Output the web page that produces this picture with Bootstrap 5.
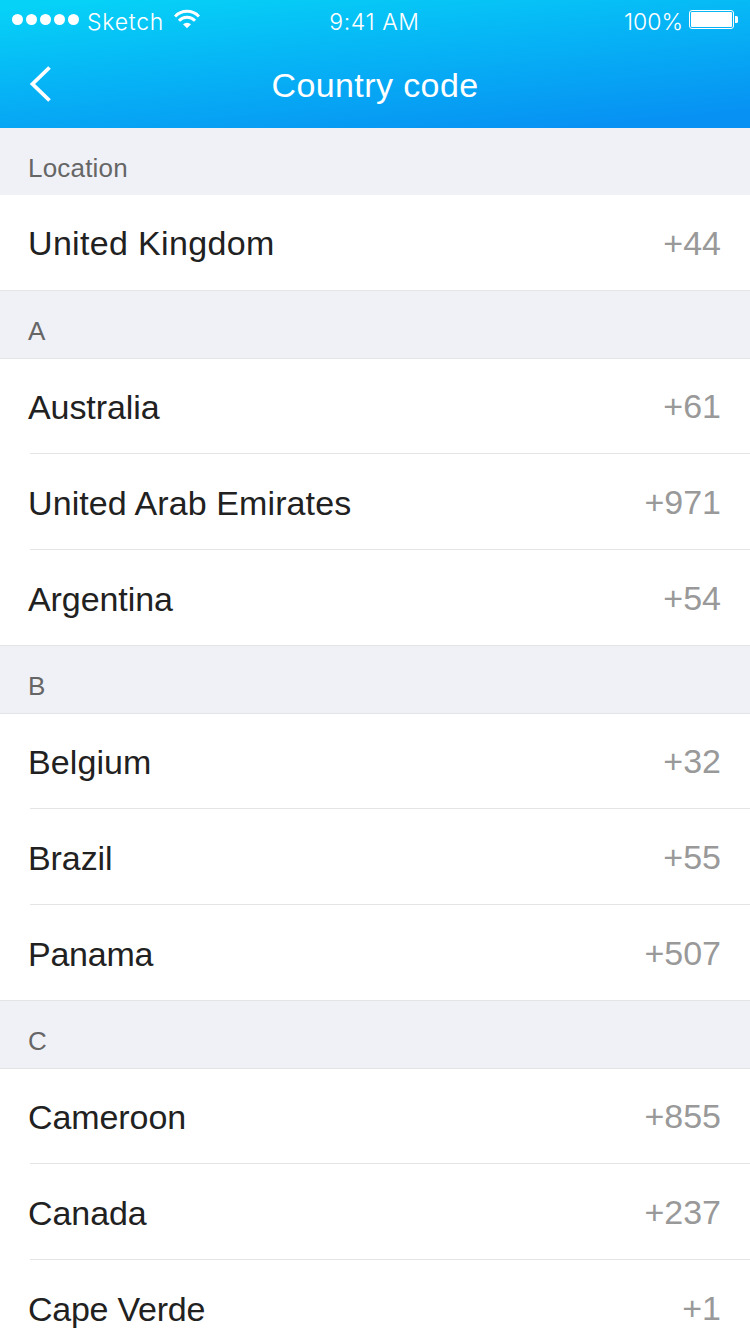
<!DOCTYPE html>
<html lang="en">
<head>
<meta charset="utf-8">
<meta name="viewport" content="width=device-width, initial-scale=1">
<title>Country code</title>
<link href="https://cdn.jsdelivr.net/npm/bootstrap@5.3.0/dist/css/bootstrap.min.css" rel="stylesheet">
<style>
body{font-family:"Liberation Sans",Arial,sans-serif;color:#212121;height:1334px;overflow:hidden}
.app-header{height:128px;background:linear-gradient(174.5deg,#06d1f7 5%,#0792f3 91%)}
.status-bar{height:40px;padding:0 12px;font:300 23px/40px Inter,sans-serif;display:grid;grid-template-columns:1fr auto 1fr}
.status-bar span{position:relative;top:2px}
.app-header svg{display:block}
.carrier{letter-spacing:.75px;margin-left:8px;width:79px;margin-right:8px}
.clock{letter-spacing:.6px;margin-right:1px}
.percent{margin-right:6px}
.title-bar{height:88px;display:grid;grid-template-columns:100px 1fr 100px}
.title-bar h1{font-size:34px;line-height:40px;letter-spacing:.4px;padding-top:2px}
.back-btn{padding-left:29px}
.section-head{height:69px;background:#f0f1f6;border-top:1px solid #e3e4e6;border-bottom:1px solid #e3e4e6;color:#666;font-size:26px;line-height:30px;padding:25px 28px 0}
.section-head.first{height:67px;border:0;padding-top:25px;letter-spacing:.2px}
.country{height:96px;padding:0 29px 0 28px;font-size:34px;line-height:40px}
.country:first-child,.country:last-child{height:95px}
.country:not(:last-child){background:linear-gradient(#e3e4e6,#e3e4e6) 30px 100%/100% 1px no-repeat}
.country-name{padding-top:29px;letter-spacing:-.08px}
.country-name.wide{letter-spacing:.33px}
.country-name.long{letter-spacing:.1px}
.country-name.tight{letter-spacing:-.25px}
.code{padding-top:28px;color:#999}
.country:first-child .country-name{padding-top:28px}
.country:first-child .code{padding-top:27px}
.first+div .country .code{padding-top:28px}
</style>
</head>
<body class="bg-white">
<header class="app-header text-white">
  <div class="status-bar">
    <div class="d-flex">
      <svg width="67" height="40" fill="#fff"><circle cx="5.5" cy="19.5" r="5.5"/><circle cx="19.5" cy="19.5" r="5.5"/><circle cx="33.5" cy="19.5" r="5.5"/><circle cx="47.5" cy="19.5" r="5.5"/><circle cx="61.5" cy="19.5" r="5.5"/></svg>
      <span class="carrier">Sketch</span>
      <svg width="26" height="40" fill="none" stroke="#fff" stroke-width="3"><path d="M1 16.500A16.600 16.600 0 0 1 25 16.500M5 20.800A10.900 10.900 0 0 1 21 20.800"/><path d="M9 24.300A5.700 5.700 0 0 1 17 24.300L13 28.200Z" fill="#fff" stroke="none"/></svg>
    </div>
    <span class="clock">9:41 AM</span>
    <div class="d-flex justify-content-end">
      <span class="percent">100%</span>
      <svg width="49" height="40"><rect x=".5" y="10.5" width="44" height="18" rx="2.5" fill="none" stroke="#fff"/><rect x="2" y="12" width="41" height="15" rx="1" fill="#fff"/><path d="M46 16h1.500q1.500 0 1.500 1.500v4q0 1.500-1.500 1.500h-1.500z" fill="#fff"/></svg>
    </div>
  </div>
  <div class="title-bar align-items-center">
    <a class="back-btn" href="#" aria-label="Back"><svg width="24" height="38" viewBox="0 0 24 38" fill="none" stroke="#fff" stroke-width="3.800"><path d="M20.500 2.500 3.500 19 20.500 35.500"/></svg></a>
    <h1 class="fw-normal text-center m-0">Country code</h1>
  </div>
</header>
<main>
  <div class="section-head first">Location</div>
  <div>
    <div class="country d-flex justify-content-between"><span class="country-name wide">United Kingdom</span><span class="code">+44</span></div>
  </div>
  <div class="section-head">A</div>
  <div>
    <div class="country d-flex justify-content-between"><span class="country-name">Australia</span><span class="code">+61</span></div>
    <div class="country d-flex justify-content-between"><span class="country-name long">United Arab Emirates</span><span class="code">+971</span></div>
    <div class="country d-flex justify-content-between"><span class="country-name">Argentina</span><span class="code">+54</span></div>
  </div>
  <div class="section-head">B</div>
  <div>
    <div class="country d-flex justify-content-between"><span class="country-name long">Belgium</span><span class="code">+32</span></div>
    <div class="country d-flex justify-content-between"><span class="country-name">Brazil</span><span class="code">+55</span></div>
    <div class="country d-flex justify-content-between"><span class="country-name tight">Panama</span><span class="code">+507</span></div>
  </div>
  <div class="section-head">C</div>
  <div>
    <div class="country d-flex justify-content-between"><span class="country-name">Cameroon</span><span class="code">+855</span></div>
    <div class="country d-flex justify-content-between"><span class="country-name">Canada</span><span class="code">+237</span></div>
    <div class="country d-flex justify-content-between"><span class="country-name tight">Cape Verde</span><span class="code">+1</span></div>
  </div>
</main>
<script src="https://cdn.jsdelivr.net/npm/bootstrap@5.3.0/dist/js/bootstrap.bundle.min.js"></script>
</body>
</html>
